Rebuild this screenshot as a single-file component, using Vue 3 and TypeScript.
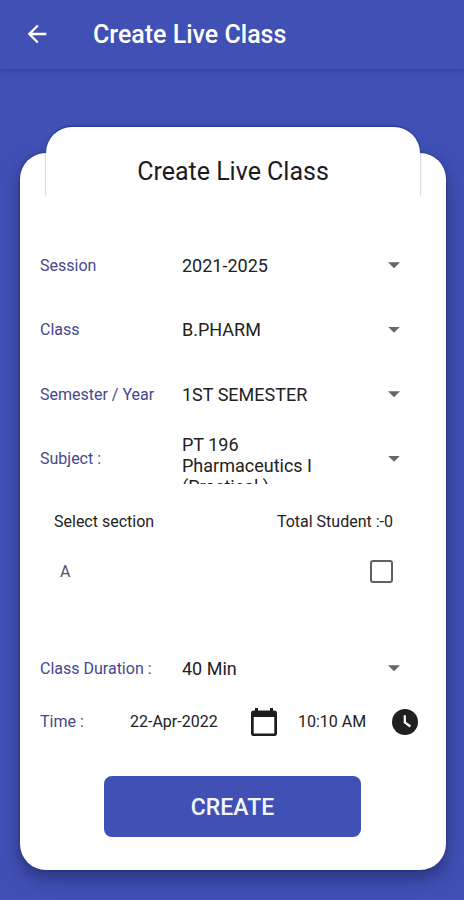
<script setup lang="ts">
import { ref } from 'vue'

interface Field {
  label: string
  value: string
}

const fields: Field[] = [
  { label: 'Session', value: '2021-2025' },
  { label: 'Class', value: 'B.PHARM' },
  { label: 'Semester / Year', value: '1ST SEMESTER' },
  { label: 'Subject :', value: 'PT 196 Pharmaceutics I (Practical )' },
]
const checked = ref(false)
</script>

<template>
  <div class="screen">
    <header class="bar">
      <svg class="back" viewBox="0 0 24 24"><path d="M20 11H7.83l5.59-5.59L12 4l-8 8 8 8 1.41-1.41L7.83 13H20v-2z" /></svg>
      <h1>Create Live Class</h1>
    </header>
    <main>
      <div class="tab"><h2>Create Live Class</h2></div>
      <section class="card">
        <div v-for="f in fields" :key="f.label" class="row">
          <span class="label">{{ f.label }}</span>
          <div class="value"><span>{{ f.value }}</span></div>
          <i class="caret"></i>
        </div>
        <div class="section-head">
          <span>Select section</span>
          <span class="total">Total Student :-0</span>
        </div>
        <div class="section-item">
          <span>A</span>
          <button class="check" :aria-pressed="checked" @click="checked = !checked"></button>
        </div>
        <div class="row duration">
          <span class="label">Class Duration :</span>
          <div class="value"><span>40 Min</span></div>
          <i class="caret"></i>
        </div>
        <div class="time">
          <span class="label">Time :</span>
          <span class="date">22-Apr-2022</span>
          <svg class="calendar" viewBox="0 0 26 28">
            <path fill-rule="evenodd" d="M4 0h3v2.5h12V0h3v2.5h1.2A2.8 2.8 0 0 1 26 5.3v19.9a2.8 2.8 0 0 1-2.8 2.8H2.8A2.8 2.8 0 0 1 0 25.2V5.3a2.8 2.8 0 0 1 2.8-2.8H4zM2.7 9v16.4h20.6V9z" />
          </svg>
          <span class="clock-text">10:10 AM</span>
          <svg class="clock" viewBox="0 0 26 26">
            <circle cx="13" cy="13" r="13" />
            <path d="M12.8 6.2v7.3l5.6 4" />
          </svg>
        </div>
        <button class="create">CREATE</button>
      </section>
    </main>
  </div>
</template>

<style>
body {
  margin: 0;
  background: #4050b5;
}
</style>

<style scoped>
.screen {
  width: 464px;
  height: 900px;
  overflow: hidden;
  background: #4050b5;
  font-family: Roboto, sans-serif;
  color: #222;
}
h1, h2 {
  margin: 0;
  white-space: nowrap;
}
.bar {
  display: flex;
  align-items: center;
  box-sizing: border-box;
  height: 69px;
  padding: 0 0 2px 23px;
  box-shadow: 0 1px 6px rgba(20, 30, 90, 0.32);
}
.back {
  width: 28px;
  height: 28px;
  fill: #fff;
}
h1 {
  margin-left: 42px;
  padding-top: 2px;
  color: #fff;
  font-size: 25px;
  font-weight: 500;
}
main {
  display: flex;
  flex-direction: column;
  padding: 58px 18px 0 20px;
}
.tab {
  z-index: 1;
  display: flex;
  justify-content: center;
  box-sizing: border-box;
  height: 70px;
  margin: 0 26px -44px;
  padding-top: 29px;
  border-radius: 26px 26px 0 0;
  background: #fff;
  box-shadow: 0 -1px 2px rgba(10, 25, 110, 0.55);
  clip-path: inset(-4px -4px 0 -4px);
}
h2 {
  color: #1c1c1c;
  font-size: 25px;
  line-height: 31px;
  font-weight: 400;
}
.card {
  box-sizing: border-box;
  height: 717px;
  padding: 80px 20px 0;
  border-radius: 26px;
  background: #fff;
  box-shadow: 0 0 2px #142b85, 0 8px 18px rgba(25, 30, 75, 0.55);
}
.row {
  display: flex;
  align-items: center;
  height: 64.5px;
}
.label {
  width: 142px;
  color: #45478f;
  font-size: 16px;
  white-space: nowrap;
}
.value {
  width: 140px;
  max-height: 50px;
  overflow: hidden;
  font-size: 18px;
  line-height: 21px;
}
.caret {
  width: 12px;
  height: 6px;
  margin-left: 66px;
  background: #666;
  clip-path: polygon(0 0, 100% 0, 50% 100%);
}
.section-head {
  display: flex;
  justify-content: space-between;
  height: 20px;
  margin-top: 21px;
  padding: 0 33px 0 14px;
  font-size: 16px;
  line-height: 20px;
}
.section-item {
  display: flex;
  align-items: center;
  justify-content: space-between;
  height: 24px;
  margin-top: 27px;
  padding: 0 33px 0 20px;
  color: #555;
  font-size: 16px;
}
.check {
  box-sizing: border-box;
  width: 23px;
  height: 23px;
  padding: 0;
  border: 2px solid #606060;
  border-radius: 3px;
  background: #fff;
}
.duration {
  margin-top: 53px;
}
.time {
  display: flex;
  align-items: center;
  height: 30px;
  margin-top: 6px;
  font-size: 16px;
  white-space: nowrap;
}
.time .label {
  width: 90px;
}
.date {
  width: 121px;
}
.calendar {
  width: 26px;
  height: 28px;
  fill: #1d1d1d;
}
.clock-text {
  width: 94px;
  margin-left: 21px;
}
.clock {
  flex: none;
  width: 26px;
  height: 26px;
  fill: #202020;
}
.clock path {
  fill: none;
  stroke: #fff;
  stroke-width: 2.2;
}
.create {
  display: block;
  width: 257px;
  height: 61px;
  margin: 39px 0 0 64px;
  padding: 2px 0 0;
  border: 0;
  border-radius: 8px;
  background: #4050b5;
  color: #f2f5ff;
  font: 500 23px Roboto, sans-serif;
}
</style>
